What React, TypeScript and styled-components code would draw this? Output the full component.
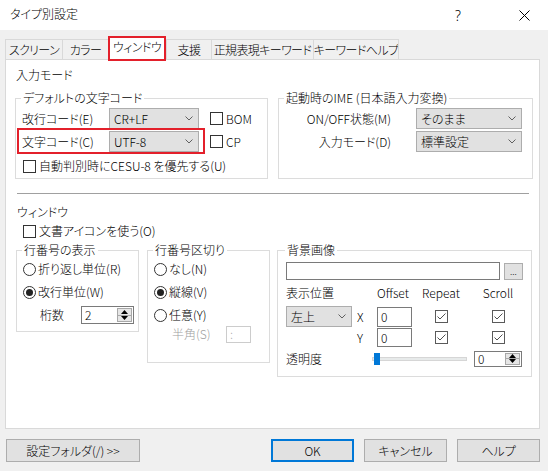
import React from "react";
import styled, { createGlobalStyle } from "styled-components";

const GlobalStyle = createGlobalStyle`
  html, body { margin: 0; padding: 0; background: #f0f0f0; }
  body {
    font-family: "Noto Sans CJK JP", "Noto Sans", sans-serif;
    font-size: 12px;
    font-weight: 300;
    color: #000;
    font-feature-settings: "palt";
  }
  * { box-sizing: border-box; }
`;

const Window = styled.div`
  width: 548px;
  height: 471px;
  background: #f0f0f0;
  display: flex;
  flex-direction: column;
  overflow: hidden;
`;

const TitleBar = styled.div`
  height: 30px;
  flex-shrink: 0;
  background: #fff;
  display: flex;
  align-items: center;
  padding-left: 10px;
`;

const Title = styled.div`
  flex: 1;
  line-height: 16px;
  margin-top: -2px;
`;

const CaptionButton = styled.div<{ $w: number; $mr?: number }>`
  width: ${(p) => p.$w}px;
  margin-right: ${(p) => p.$mr ?? 0}px;
  height: 30px;
  display: flex;
  align-items: center;
  justify-content: center;
  font-family: "Noto Sans", sans-serif;
  font-size: 14px;
`;

const TabStrip = styled.div`
  display: flex;
  align-items: flex-end;
  height: 20px;
  margin: 9px 0 0 5px;
  position: relative;
  z-index: 1;
`;

const Tab = styled.div<{ $w: number; $active?: boolean; $last?: boolean }>`
  width: ${(p) => p.$w}px;
  height: ${(p) => (p.$active ? 25 : 20)}px;
  margin-bottom: ${(p) => (p.$active ? -2 : 0)}px;
  background: ${(p) => (p.$active ? "#fff" : "#f0f0f0")};
  border: ${(p) => (p.$active ? "2px solid #e3202b" : "1px solid #d9d9d9")};
  border-bottom: ${(p) => (p.$active ? "2px solid #e3202b" : "none")};
  border-right: ${(p) =>
    p.$active ? "2px solid #e3202b" : p.$last ? "1px solid #d9d9d9" : "none"};
  display: flex;
  align-items: center;
  justify-content: center;
  line-height: 16px;
  letter-spacing: -0.6px;
  padding-bottom: ${(p) => (p.$active ? 3 : 0)}px;
  white-space: nowrap;
  overflow: hidden;
`;

const Panel = styled.div`
  margin: 0 8px 0 5px;
  height: 370px;
  flex-shrink: 0;
  background: #fff;
  border: 1px solid #d9d9d9;
  padding: 0 8px 0 9px;
  display: flex;
  flex-direction: column;
`;

const SectionLabel = styled.div<{ $mt: number; $pl: number }>`
  margin-top: ${(p) => p.$mt}px;
  padding-left: ${(p) => p.$pl}px;
  line-height: 16px;
  height: 16px;
`;

const GroupRow = styled.div<{ $mt: number }>`
  display: flex;
  align-items: flex-start;
  margin-top: ${(p) => p.$mt}px;
`;

const Group = styled.fieldset<{ $w: number; $h: number; $ml?: number; $pl?: number }>`
  margin: 0 0 0 ${(p) => p.$ml ?? 0}px;
  padding: 0 0 0 ${(p) => p.$pl ?? 6}px;
  border: 1px solid #dcdcdc;
  width: ${(p) => p.$w}px;
  height: ${(p) => p.$h}px;
  min-width: 0;
  display: flex;
  flex-direction: column;
  flex-shrink: 0;
`;

const Legend = styled.legend`
  padding: 0 2px;
  margin-left: -1px;
  line-height: 16px;
  height: 16px;
`;

const Row = styled.div<{ $mt: number; $h?: number; $pl?: number }>`
  display: flex;
  align-items: center;
  margin-top: ${(p) => p.$mt}px;
  height: ${(p) => p.$h ?? 21}px;
  padding-left: ${(p) => p.$pl ?? 0}px;
  line-height: 16px;
  white-space: nowrap;
`;

const FieldLabel = styled.div<{ $w: number; $right?: boolean; $pl?: number; $disabled?: boolean }>`
  width: ${(p) => p.$w}px;
  flex-shrink: 0;
  text-align: ${(p) => (p.$right ? "right" : "left")};
  padding-left: ${(p) => p.$pl ?? 0}px;
  color: ${(p) => (p.$disabled ? "#a0a0a0" : "#000")};
  white-space: nowrap;
`;

const Highlight = styled.div`
  display: flex;
  align-items: center;
  position: relative;
  &::after {
    content: "";
    position: absolute;
    top: -3px;
    bottom: -2px;
    left: -5px;
    right: -6px;
    border: 2px solid #e3202b;
    pointer-events: none;
  }
`;

const SelectBox = styled.div<{ $w: number; $ml?: number }>`
  width: ${(p) => p.$w}px;
  height: 21px;
  margin-left: ${(p) => p.$ml ?? 0}px;
  background: #e1e1e1;
  border: 1px solid #adadad;
  display: flex;
  align-items: center;
  justify-content: space-between;
  padding: 0 5px 0 4px;
  flex-shrink: 0;
`;

const Chevron = () => (
  <svg width="8" height="5" viewBox="0 0 8 5">
    <path d="M0.5 0.5 L4 4 L7.5 0.5" fill="none" stroke="#606060" strokeWidth="1" />
  </svg>
);

const Select = ({ value, w, ml }: { value: string; w: number; ml?: number }) => (
  <SelectBox $w={w} $ml={ml}>
    <span>{value}</span>
    <Chevron />
  </SelectBox>
);

const CheckBoxBox = styled.span<{ $ml?: number; $gray?: boolean }>`
  width: 13px;
  height: 13px;
  margin-left: ${(p) => p.$ml ?? 0}px;
  border: 1px solid ${(p) => (p.$gray ? "#5a5a5a" : "#333")};
  background: #fff;
  display: inline-flex;
  align-items: center;
  justify-content: center;
  flex-shrink: 0;
`;

const CheckText = styled.span`
  margin-left: 3px;
`;

const Check = ({ checked, ml }: { checked?: boolean; ml?: number }) => (
  <CheckBoxBox $ml={ml} $gray={checked}>
    {checked && (
      <svg width="11" height="11" viewBox="0 0 11 11">
        <path d="M1.5 5.5 L4 8 L9.5 2.5" fill="none" stroke="#505050" strokeWidth="1" />
      </svg>
    )}
  </CheckBoxBox>
);

const RadioCircle = styled.span`
  width: 13px;
  height: 13px;
  border: 1px solid #333;
  border-radius: 50%;
  background: #fff;
  display: inline-flex;
  align-items: center;
  justify-content: center;
  flex-shrink: 0;
`;

const RadioDot = styled.span`
  width: 7px;
  height: 7px;
  border-radius: 50%;
  background: #222;
`;

const RadioText = styled.span`
  margin-left: 2px;
`;

const Radio = ({ checked, label }: { checked?: boolean; label: string }) => (
  <>
    <RadioCircle>{checked && <RadioDot />}</RadioCircle>
    <RadioText>{label}</RadioText>
  </>
);

const TextBox = styled.div<{ $w: number; $h: number; $disabled?: boolean }>`
  width: ${(p) => p.$w}px;
  flex: none;
  height: ${(p) => p.$h}px;
  border: 1px solid ${(p) => (p.$disabled ? "#cccccc" : "#7a7a7a")};
  background: #fff;
  color: ${(p) => (p.$disabled ? "#a0a0a0" : "#000")};
  display: flex;
  align-items: center;
  padding-left: 3px;
  line-height: 14px;
`;

const SpinBox = styled.div<{ $w: number; $h: number }>`
  width: ${(p) => p.$w}px;
  height: ${(p) => p.$h}px;
  border: 1px solid #7a7a7a;
  background: #fff;
  display: flex;
  align-items: stretch;
  flex-shrink: 0;
`;

const SpinValue = styled.div`
  flex: 1;
  display: flex;
  align-items: center;
  padding-left: 3px;
  line-height: 14px;
`;

const SpinButtons = styled.div`
  width: 15px;
  margin: 1px;
  border: 1px solid #a8a8a8;
  background: #e6e6e6;
  display: flex;
  flex-direction: column;
`;

const SpinHalf = styled.div<{ $top?: boolean }>`
  flex: 1;
  display: flex;
  align-items: center;
  justify-content: center;
  border-bottom: ${(p) => (p.$top ? "1px solid #a8a8a8" : "none")};
`;

const Spinner = ({ value, w, h }: { value: string; w: number; h: number }) => (
  <SpinBox $w={w} $h={h}>
    <SpinValue>{value}</SpinValue>
    <SpinButtons>
      <SpinHalf $top>
        <svg width="7" height="4" viewBox="0 0 7 4">
          <path d="M0 4 L3.5 0 L7 4 Z" fill="#000" />
        </svg>
      </SpinHalf>
      <SpinHalf>
        <svg width="7" height="4" viewBox="0 0 7 4">
          <path d="M0 0 L3.5 4 L7 0 Z" fill="#000" />
        </svg>
      </SpinHalf>
    </SpinButtons>
  </SpinBox>
);

const Separator = styled.div`
  margin: 14px 2px 0 2px;
  height: 1px;
  background: #a0a0a0;
  flex-shrink: 0;
`;

const SmallButton = styled.div`
  width: 19px;
  height: 17px;
  margin-left: 4px;
  background: #e1e1e1;
  border: 1px solid #adadad;
  display: flex;
  align-items: flex-end;
  justify-content: center;
  font-size: 9px;
  line-height: 12px;
  padding-bottom: 1px;
`;

const BgGrid = styled.div<{ $mt: number; $h: number }>`
  display: grid;
  grid-template-columns: 66px 25px 35px 58px 56px;
  align-items: center;
  margin-top: ${(p) => p.$mt}px;
  height: ${(p) => p.$h}px;
  line-height: 16px;
  white-space: nowrap;
`;

const Cell = styled.div<{ $center?: boolean; $span?: number; $pl?: number }>`
  display: flex;
  align-items: center;
  justify-content: ${(p) => (p.$center ? "center" : "flex-start")};
  grid-column: ${(p) => (p.$span ? `span ${p.$span}` : "auto")};
  padding-left: ${(p) => p.$pl ?? 0}px;
`;

const SliderTrack = styled.div`
  width: 95px;
  height: 4px;
  background: #e7eaea;
  border: 1px solid #d6d6d6;
  display: flex;
  align-items: center;
  flex-shrink: 0;
`;

const SliderThumb = styled.div`
  width: 6px;
  height: 12px;
  margin-left: 1px;
  background: #0078d7;
  flex-shrink: 0;
`;

const ButtonBar = styled.div`
  display: flex;
  align-items: center;
  margin-top: 10px;
  height: 23px;
  padding: 0 8px 0 6px;
`;

const DialogButton = styled.div<{ $w: number; $ml?: number; $default?: boolean }>`
  width: ${(p) => p.$w}px;
  height: 23px;
  margin-left: ${(p) => p.$ml ?? 0}px;
  background: #e1e1e1;
  border: ${(p) => (p.$default ? "2px solid #0078d7" : "1px solid #adadad")};
  display: flex;
  align-items: center;
  justify-content: center;
  line-height: 16px;
  white-space: nowrap;
`;

const Spacer = styled.div`
  flex: 1;
`;

const EndGap = styled.div`
  width: 9px;
  flex-shrink: 0;
`;

export default function App() {
  return (
    <Window>
      <GlobalStyle />
      <TitleBar>
        <Title>タイプ別設定</Title>
        <CaptionButton $w={46} $mr={20}>?</CaptionButton>
        <CaptionButton $w={47}>
          <svg width="11" height="11" viewBox="0 0 11 11">
            <path d="M0.5 0.5 L10.5 10.5 M10.5 0.5 L0.5 10.5" stroke="#000" strokeWidth="1" />
          </svg>
        </CaptionButton>
      </TitleBar>

      <TabStrip>
        <Tab $w={57}>スクリーン</Tab>
        <Tab $w={46}>カラー</Tab>
        <Tab $w={58} $active>ウィンドウ</Tab>
        <Tab $w={45}>支援</Tab>
        <Tab $w={102}>正規表現キーワード</Tab>
        <Tab $w={86} $last>キーワードヘルプ</Tab>
      </TabStrip>

      <Panel>
        <SectionLabel $mt={7} $pl={1}>入力モード</SectionLabel>

        <GroupRow $mt={7}>
          <Group $w={253} $h={89}>
            <Legend>デフォルトの文字コード</Legend>
            <Row $mt={2}>
              <FieldLabel $w={87}>改行コード(E)</FieldLabel>
              <Select value="CR+LF" w={90} />
              <Check ml={11} />
              <CheckText>BOM</CheckText>
            </Row>
            <Row $mt={2}>
              <Highlight>
                <FieldLabel $w={87}>文字コード(C)</FieldLabel>
                <Select value="UTF-8" w={90} />
              </Highlight>
              <Check ml={11} />
              <CheckText>CP</CheckText>
            </Row>
            <Row $mt={6} $h={16} $pl={1}>
              <Check />
              <CheckText>自動判別時にCESU-8 を優先する(U)</CheckText>
            </Row>
          </Group>

          <Group $w={255} $h={89} $ml={10}>
            <Legend>起動時のIME (日本語入力変換)</Legend>
            <Row $mt={2}>
              <FieldLabel $w={106} $right>ON/OFF状態(M)</FieldLabel>
              <Select value="そのまま" w={106} ml={25} />
            </Row>
            <Row $mt={2}>
              <FieldLabel $w={106} $right>入力モード(D)</FieldLabel>
              <Select value="標準設定" w={106} ml={25} />
            </Row>
          </Group>
        </GroupRow>

        <Separator />

        <SectionLabel $mt={10} $pl={2}>ウィンドウ</SectionLabel>
        <Row $mt={3} $h={16} $pl={8}>
          <Check />
          <CheckText>文書アイコンを使う(O)</CheckText>
        </Row>

        <GroupRow $mt={3}>
          <Group $w={123} $h={90} $ml={1}>
            <Legend>行番号の表示</Legend>
            <Row $mt={3} $h={16}>
              <Radio label="折り返し単位(R)" />
            </Row>
            <Row $mt={7} $h={16}>
              <Radio checked label="改行単位(W)" />
            </Row>
            <Row $mt={5} $h={20}>
              <FieldLabel $w={58} $pl={17}>桁数</FieldLabel>
              <Spinner value="2" w={53} h={18} />
            </Row>
          </Group>

          <Group $w={123} $h={121} $ml={8}>
            <Legend>行番号区切り</Legend>
            <Row $mt={3} $h={16}>
              <Radio label="なし(N)" />
            </Row>
            <Row $mt={7} $h={16}>
              <Radio checked label="縦線(V)" />
            </Row>
            <Row $mt={7} $h={16}>
              <Radio label="任意(Y)" />
            </Row>
            <Row $mt={1} $h={20}>
              <FieldLabel $w={72} $pl={18} $disabled>半角(S)</FieldLabel>
              <TextBox $w={25} $h={17} $disabled>:</TextBox>
            </Row>
          </Group>

          <Group $w={255} $h={135} $ml={7} $pl={8}>
            <Legend>背景画像</Legend>
            <Row $mt={4} $h={18}>
              <TextBox $w={214} $h={18} />
              <SmallButton>...</SmallButton>
            </Row>
            <BgGrid $mt={5} $h={16}>
              <Cell $span={2}>表示位置</Cell>
              <Cell>Offset</Cell>
              <Cell $center>Repeat</Cell>
              <Cell $center>Scroll</Cell>
            </BgGrid>
            <BgGrid $mt={5} $h={21}>
              <Cell>
                <Select value="左上" w={66} />
              </Cell>
              <Cell $pl={5}>X</Cell>
              <Cell>
                <TextBox $w={35} $h={20}>0</TextBox>
              </Cell>
              <Cell $center>
                <Check checked />
              </Cell>
              <Cell $center>
                <Check checked />
              </Cell>
            </BgGrid>
            <BgGrid $mt={1} $h={19}>
              <Cell />
              <Cell $pl={5}>Y</Cell>
              <Cell>
                <TextBox $w={35} $h={19}>0</TextBox>
              </Cell>
              <Cell $center>
                <Check checked />
              </Cell>
              <Cell $center>
                <Check checked />
              </Cell>
            </BgGrid>
            <Row $mt={3} $h={17}>
              <FieldLabel $w={86}>透明度</FieldLabel>
              <SliderTrack>
                <SliderThumb />
              </SliderTrack>
              <Spacer />
              <Spinner value="0" w={48} h={16} />
              <EndGap />
            </Row>
          </Group>
        </GroupRow>
      </Panel>

      <ButtonBar>
        <DialogButton $w={134}>設定フォルダ(/) &gt;&gt;</DialogButton>
        <Spacer />
        <DialogButton $w={83} $default>OK</DialogButton>
        <DialogButton $w={83} $ml={10}>キャンセル</DialogButton>
        <DialogButton $w={83} $ml={10}>ヘルプ</DialogButton>
      </ButtonBar>
    </Window>
  );
}
